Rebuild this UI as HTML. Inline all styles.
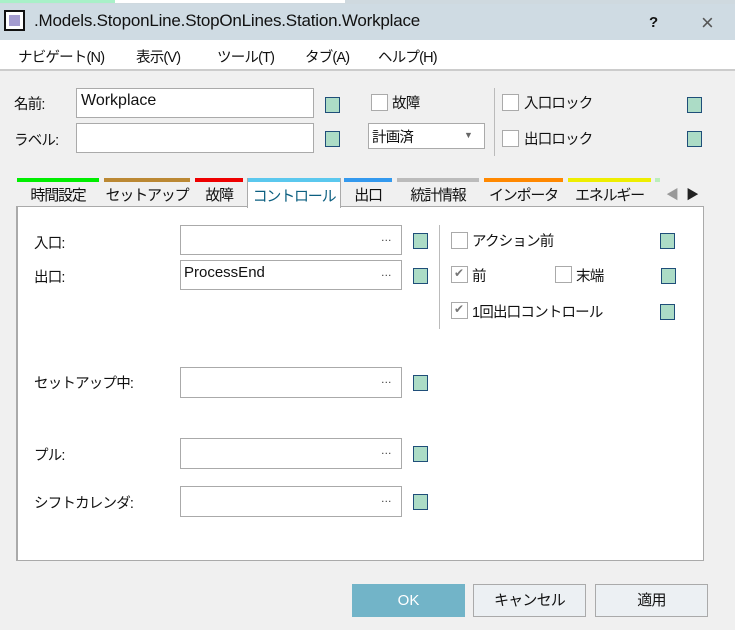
<!DOCTYPE html>
<html><head><meta charset="utf-8"><style>
*{margin:0;padding:0;box-sizing:border-box}
body{width:735px;height:630px;overflow:hidden;background:#f0f0f0;position:relative;font-family:"Liberation Sans","Noto Sans CJK JP",sans-serif;font-size:14.5px;letter-spacing:-0.8px;color:#111;white-space:nowrap}
.a{position:absolute}
.lat{letter-spacing:0}
.sq{position:absolute;width:15px;height:16px;background:#acdcc6;border:1px solid #1f4e79}
.tb{position:absolute;background:#fff;border:1px solid #aaa}
.cb{position:absolute;width:17px;height:17px;background:#fff;border:1px solid #aaa}
.dots{position:absolute;right:10px;top:6px;font-size:11px;color:#333}
.ts{position:absolute;top:178px;height:4px}
.tl{position:absolute;top:184px;font-size:15px;text-align:center;letter-spacing:-1.2px}
.btn{position:absolute;top:584px;height:33px;border:1px solid #aaa;background:#ecf0f3;text-align:center;line-height:31px;font-size:15px}
</style></head><body>
<div class="a" style="left:0;top:0;width:735px;height:5px;background:#cfd9df"></div>
<div class="a" style="left:0;top:0;width:115px;height:3px;background:#a8f0c8"></div>
<div class="a" style="left:115px;top:0;width:230px;height:3px;background:#fff"></div>
<div class="a" style="left:0;top:4px;width:735px;height:36px;background:#cfdbe3"></div>
<div class="a" style="left:4px;top:10px;width:21px;height:21px;background:#fff;border:2px solid #111"></div>
<div class="a" style="left:9px;top:15px;width:11px;height:11px;background:#a49cd0"></div>
<div class="a lat" style="left:34px;top:11px;font-size:17px;letter-spacing:-0.2px;color:#111">.Models.StoponLine.StopOnLines.Station.Workplace</div>
<div class="a" style="left:649px;top:14px;font-weight:bold;font-size:15px">?</div>
<div class="a" style="left:701px;top:10px;font-size:22px;color:#555">×</div>
<div class="a" style="left:0;top:40px;width:735px;height:31px;background:#fff;border-bottom:2px solid #ccc"></div>
<div class="a" style="left:18px;top:46px">ナビゲート(N)</div>
<div class="a" style="left:136px;top:46px">表示(V)</div>
<div class="a" style="left:217px;top:46px">ツール(T)</div>
<div class="a" style="left:305px;top:46px">タブ(A)</div>
<div class="a" style="left:378px;top:46px">ヘルプ(H)</div>

<div class="a" style="left:14px;top:93px">名前:</div>
<div class="tb" style="left:76px;top:88px;width:238px;height:30px"><span class="a lat" style="left:4px;top:3px;font-size:16px">Workplace</span></div>
<div class="sq" style="left:325px;top:97px"></div>
<div class="a" style="left:14px;top:129px">ラベル:</div>
<div class="tb" style="left:76px;top:123px;width:238px;height:30px"></div>
<div class="sq" style="left:325px;top:131px"></div>
<div class="cb" style="left:371px;top:94px"></div><div class="a" style="left:392px;top:92px">故障</div>
<div class="tb" style="left:368px;top:123px;width:117px;height:26px"><span class="a" style="left:3px;top:2px">計画済</span><span class="a" style="left:95px;top:6px;font-size:9px;color:#666">▼</span></div>
<div class="a" style="left:494px;top:88px;width:1px;height:68px;background:#bbb"></div>
<div class="cb" style="left:502px;top:94px"></div><div class="a" style="left:524px;top:92px">入口ロック</div>
<div class="sq" style="left:687px;top:97px"></div>
<div class="cb" style="left:502px;top:130px"></div><div class="a" style="left:524px;top:128px">出口ロック</div>
<div class="sq" style="left:687px;top:131px"></div>

<div class="ts" style="left:17px;width:82px;background:#00ee00"></div>
<div class="ts" style="left:104px;width:86px;background:#bb8833"></div>
<div class="ts" style="left:195px;width:48px;background:#ee0000"></div>
<div class="ts" style="left:344px;width:48px;background:#3399ee"></div>
<div class="ts" style="left:397px;width:82px;background:#bbbbbb"></div>
<div class="ts" style="left:484px;width:79px;background:#ff8800"></div>
<div class="ts" style="left:568px;width:83px;background:#eeee00"></div>
<div class="ts" style="left:655px;width:5px;background:#bbeebb"></div>
<div class="a" style="left:16px;top:206px;width:688px;height:355px;background:#fff;border:1px solid #aaa;border-left-width:2px"></div>
<div class="a" style="left:247px;top:178px;width:94px;height:30px;background:#fff;border:1px solid #aaa;border-bottom:none"></div>
<div class="ts" style="left:248px;width:92px;background:#5bc8ee"></div>
<div class="tl" style="left:17px;width:82px">時間設定</div>
<div class="tl" style="left:104px;width:86px">セットアップ</div>
<div class="tl" style="left:195px;width:48px">故障</div>
<div class="tl" style="left:247px;width:94px;top:185px;color:#0b5f80">コントロール</div>
<div class="tl" style="left:344px;width:48px">出口</div>
<div class="tl" style="left:397px;width:82px">統計情報</div>
<div class="tl" style="left:484px;width:79px">インポータ</div>
<div class="tl" style="left:568px;width:83px">エネルギー</div>
<div class="a" style="left:666px;top:184px;color:#999;font-size:13px">◀</div>
<div class="a" style="left:686px;top:184px;color:#222;font-size:13px">▶</div>

<div class="a" style="left:34px;top:232px">入口:</div>
<div class="tb" style="left:180px;top:225px;width:222px;height:30px"><span class="dots">…</span></div>
<div class="sq" style="left:413px;top:233px"></div>
<div class="a" style="left:34px;top:266px">出口:</div>
<div class="tb" style="left:180px;top:260px;width:222px;height:30px"><span class="a lat" style="left:3px;top:3px;font-size:15px">ProcessEnd</span><span class="dots">…</span></div>
<div class="sq" style="left:413px;top:268px"></div>
<div class="a" style="left:439px;top:225px;width:1px;height:104px;background:#bbb"></div>
<div class="cb" style="left:451px;top:232px"></div><div class="a" style="left:472px;top:230px">アクション前</div>
<div class="sq" style="left:660px;top:233px"></div>
<div class="cb" style="left:451px;top:266px"><span class="a" style="left:2px;top:-1px;font-size:12px;color:#777">✔</span></div><div class="a" style="left:472px;top:265px">前</div>
<div class="cb" style="left:555px;top:266px"></div><div class="a" style="left:576px;top:265px">末端</div>
<div class="sq" style="left:661px;top:268px"></div>
<div class="cb" style="left:451px;top:302px"><span class="a" style="left:2px;top:-1px;font-size:12px;color:#777">✔</span></div><div class="a" style="left:472px;top:301px">1回出口コントロール</div>
<div class="sq" style="left:660px;top:304px"></div>

<div class="a" style="left:34px;top:372px">セットアップ中:</div>
<div class="tb" style="left:180px;top:367px;width:222px;height:31px"><span class="dots">…</span></div>
<div class="sq" style="left:413px;top:375px"></div>
<div class="a" style="left:34px;top:444px">プル:</div>
<div class="tb" style="left:180px;top:438px;width:222px;height:31px"><span class="dots">…</span></div>
<div class="sq" style="left:413px;top:446px"></div>
<div class="a" style="left:34px;top:492px">シフトカレンダ:</div>
<div class="tb" style="left:180px;top:486px;width:222px;height:31px"><span class="dots">…</span></div>
<div class="sq" style="left:413px;top:494px"></div>

<div class="btn lat" style="left:352px;width:113px;background:#72b4c8;border-color:#72b4c8;color:#fff">OK</div>
<div class="btn" style="left:473px;width:113px">キャンセル</div>
<div class="btn" style="left:595px;width:113px">適用</div>
</body></html>
